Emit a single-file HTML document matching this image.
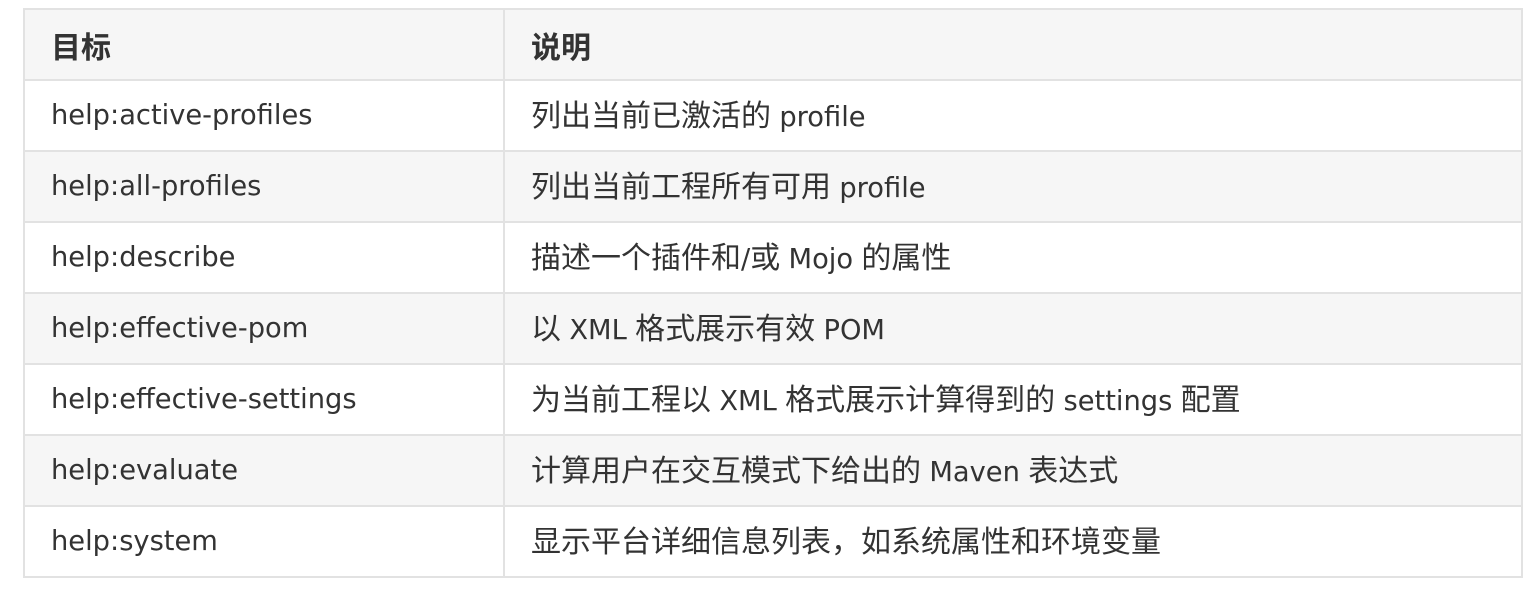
<!DOCTYPE html>
<html><head><meta charset="utf-8"><style>
body{margin:0;background:#fff;width:1534px;height:594px;overflow:hidden}
table{position:absolute;left:23px;top:8px;width:1500px;border-collapse:collapse;font-family:"Liberation Sans","Noto Sans CJK SC",sans-serif;font-size:30px;color:#333}
td,th{border:2px solid #e2e2e2;height:71px;padding:0 0 0 26px;text-align:left;vertical-align:middle;box-sizing:border-box}
td+td{padding-bottom:5px}
th{font-weight:bold}
td:first-child,th:first-child{width:480px}
tr:nth-child(odd){background:#f6f6f6}
tr:nth-child(even){background:#fff}
.l{font-family:"DejaVu Sans",sans-serif;font-size:27.3px;letter-spacing:0}
</style></head><body>
<table>
<tr><th>目标</th><th>说明</th></tr>
<tr><td class="l">help:active-profiles</td><td>列出当前已激活的 <span class="l">profile</span></td></tr>
<tr><td class="l">help:all-profiles</td><td>列出当前工程所有可用 <span class="l">profile</span></td></tr>
<tr><td class="l">help:describe</td><td>描述一个插件和<span class="l">/</span>或 <span class="l">Mojo</span> 的属性</td></tr>
<tr><td class="l">help:effective-pom</td><td>以 <span class="l">XML</span> 格式展示有效 <span class="l">POM</span></td></tr>
<tr><td class="l">help:effective-settings</td><td>为当前工程以 <span class="l">XML</span> 格式展示计算得到的 <span class="l">settings</span> 配置</td></tr>
<tr><td class="l">help:evaluate</td><td>计算用户在交互模式下给出的 <span class="l">Maven</span> 表达式</td></tr>
<tr><td class="l">help:system</td><td>显示平台详细信息列表，如系统属性和环境变量</td></tr>
</table>
</body></html>
